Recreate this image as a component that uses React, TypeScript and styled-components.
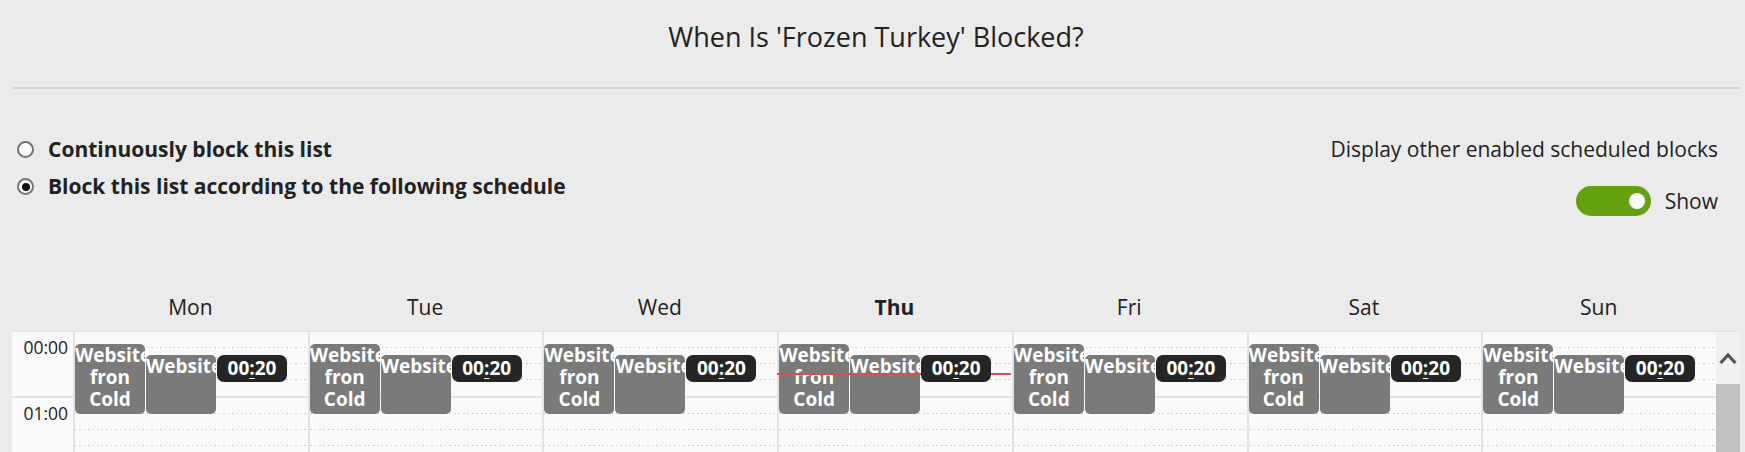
import React from 'react';
import styled, { createGlobalStyle } from 'styled-components';

const GlobalStyle = createGlobalStyle`
  html, body { margin: 0; padding: 0; background: #ebebeb; }
  body { font-family: "Open Sans", "Noto Sans", sans-serif; color: #222; }
  * { box-sizing: border-box; }
`;

const Page = styled.div`
  width: 1745px;
  height: 452px;
  overflow: hidden;
  padding: 0 5px 0 12px;
  display: flex;
  flex-direction: column;
`;

const Title = styled.h1`
  margin: 0;
  padding-top: 18px;
  font-size: 27px;
  font-weight: 400;
  line-height: 38px;
  text-align: center;
  color: #222;
`;

const Divider = styled.div`
  margin: 31px 0 0 1px;
  height: 2px;
  background: #d6d6da;
`;

const OptionsRow = styled.div`
  margin-top: 47px;
  display: flex;
  justify-content: space-between;
  align-items: flex-start;
  padding: 0 22px 0 5px;
`;

const RadioGroup = styled.div`
  display: flex;
  flex-direction: column;
  gap: 10px;
`;

const RadioLabel = styled.label`
  display: flex;
  align-items: center;
  gap: 14px;
  font-size: 21px;
  font-weight: 700;
  line-height: 27px;
  color: #222;
`;

const RadioCircle = styled.span<{ $checked?: boolean }>`
  position: relative;
  width: 17px;
  height: 17px;
  border-radius: 50%;
  border: 2px solid #747474;
  background: #fff;
  flex: none;
  &::after {
    content: '';
    display: ${(p) => (p.$checked ? 'block' : 'none')};
    position: absolute;
    left: 50%;
    top: 50%;
    width: 8px;
    height: 8px;
    margin: -4px 0 0 -4px;
    border-radius: 50%;
    background: #111;
  }
`;

const DisplayOptions = styled.div`
  margin-top: -3px;
  display: flex;
  flex-direction: column;
  align-items: flex-end;
`;

const DisplayText = styled.div`
  font-size: 21px;
  line-height: 33px;
  color: #222;
`;

const ToggleRow = styled.div`
  margin-top: 20px;
  display: flex;
  align-items: center;
  gap: 14px;
`;

const Toggle = styled.span`
  width: 75px;
  height: 30px;
  border-radius: 15px;
  background: #63a20e;
  display: flex;
  align-items: center;
  justify-content: flex-end;
  padding-right: 6px;
`;

const Knob = styled.span`
  width: 16px;
  height: 16px;
  border-radius: 50%;
  background: #fafafa;
`;

const ToggleText = styled.span`
  font-size: 21px;
  line-height: 30px;
  color: #222;
`;

const HeaderRow = styled.div`
  margin-top: 72px;
  height: 43px;
  display: grid;
  grid-template-columns: 61px repeat(7, 1fr) 24px;
`;

const DayName = styled.div<{ $today?: boolean }>`
  padding-top: 3px;
  text-align: center;
  font-size: 21px;
  line-height: 33px;
  font-weight: ${(p) => (p.$today ? 700 : 400)};
  color: #222;
`;

const CalendarArea = styled.div`
  flex: 1;
  min-height: 0;
  display: flex;
  border-top: 1px solid #e2e2e2;
  overflow: hidden;
`;

const CalendarBody = styled.div`
  flex: 1;
  display: grid;
  grid-template-columns: 61px repeat(7, 1fr);
  background: #fafafa;
  align-items: start;
`;

const Gutter = styled.div`
  display: flex;
  flex-direction: column;
`;

const GutterSlot = styled.div`
  height: 66px;
  border-bottom: 2px solid #e2e2e2;
  padding: 3px 5px 0 0;
  text-align: right;
  font-size: 17.5px;
  line-height: 24px;
  color: #222;
`;

const DayColumn = styled.div`
  position: relative;
  border-left: 2px solid #e2e2e2;
  display: flex;
  flex-direction: column;
`;

const HourSlot = styled.div`
  height: 66px;
  border-bottom: 2px solid #e2e2e2;
  display: flex;
  flex-direction: column;
`;

const Quarter = styled.div`
  flex: 1;
  background-image: repeating-linear-gradient(90deg, #cfcfcf 0 1.5px, transparent 1.5px 4.5px);
  background-size: 100% 1px;
  background-repeat: no-repeat;
  background-position: bottom left;
  &:last-child { background: none; }
`;

const EventBlock = styled.div<{ $left: number; $top: number; $height: number }>`
  position: absolute;
  left: ${(p) => p.$left}px;
  top: ${(p) => p.$top}px;
  width: 70px;
  height: ${(p) => p.$height}px;
  background: #7a7a7a;
  border-radius: 5px;
  color: #fff;
  font-size: 19px;
  font-weight: 700;
  line-height: 22px;
  text-align: center;
  overflow: hidden;
  z-index: 1;
`;

const TimeBadge = styled.div`
  position: absolute;
  left: 142px;
  top: 23px;
  width: 70px;
  height: 27px;
  background: #252525;
  border-radius: 7px;
  color: #fff;
  font-size: 19px;
  font-weight: 700;
  line-height: 27px;
  text-align: center;
  z-index: 3;
`;

const Colon = styled.span`
  text-decoration: underline;
  text-decoration-thickness: 1px;
  text-underline-offset: 3px;
`;

const NowLine = styled.div`
  position: absolute;
  left: -2px;
  right: 1px;
  top: 41px;
  height: 2px;
  background: #e8474a;
  z-index: 2;
`;

const Scrollbar = styled.div`
  width: 24px;
  display: flex;
  flex-direction: column;
  background: #f1f1f1;
`;

const ScrollButton = styled.div`
  height: 52px;
  display: flex;
  align-items: center;
  justify-content: center;
`;

const ScrollThumb = styled.div`
  flex: 1;
  background: #c1c1c1;
`;

const days = ['Mon', 'Tue', 'Wed', 'Thu', 'Fri', 'Sat', 'Sun'];
const hours = ['00:00', '01:00', '02:00'];

export default function App() {
  return (
    <>
      <GlobalStyle />
      <Page>
        <Title>When Is 'Frozen Turkey' Blocked?</Title>
        <Divider />
        <OptionsRow>
          <RadioGroup>
            <RadioLabel>
              <RadioCircle />
              Continuously block this list
            </RadioLabel>
            <RadioLabel>
              <RadioCircle $checked />
              Block this list according to the following schedule
            </RadioLabel>
          </RadioGroup>
          <DisplayOptions>
            <DisplayText>Display other enabled scheduled blocks</DisplayText>
            <ToggleRow>
              <Toggle>
                <Knob />
              </Toggle>
              <ToggleText>Show</ToggleText>
            </ToggleRow>
          </DisplayOptions>
        </OptionsRow>
        <HeaderRow>
          <div />
          {days.map((d) => (
            <DayName key={d} $today={d === 'Thu'}>
              {d}
            </DayName>
          ))}
          <div />
        </HeaderRow>
        <CalendarArea>
          <CalendarBody>
            <Gutter>
              {hours.map((h) => (
                <GutterSlot key={h}>{h}</GutterSlot>
              ))}
            </Gutter>
            {days.map((d) => (
              <DayColumn key={d}>
                {hours.map((h) => (
                  <HourSlot key={h}>
                    <Quarter />
                    <Quarter />
                    <Quarter />
                    <Quarter />
                  </HourSlot>
                ))}
                <EventBlock $left={0} $top={12} $height={70}>
                  Website fron Cold
                </EventBlock>
                <EventBlock $left={71} $top={23} $height={59}>
                  Website
                </EventBlock>
                <TimeBadge>
                  00<Colon>:</Colon>20
                </TimeBadge>
                {d === 'Thu' && <NowLine />}
              </DayColumn>
            ))}
          </CalendarBody>
          <Scrollbar>
            <ScrollButton>
              <svg width="18" height="13" viewBox="0 0 18 13">
                <path d="M1.5 11 L9 3 L16.5 11" fill="none" stroke="#555" strokeWidth="3.2" />
              </svg>
            </ScrollButton>
            <ScrollThumb />
          </Scrollbar>
        </CalendarArea>
      </Page>
    </>
  );
}
